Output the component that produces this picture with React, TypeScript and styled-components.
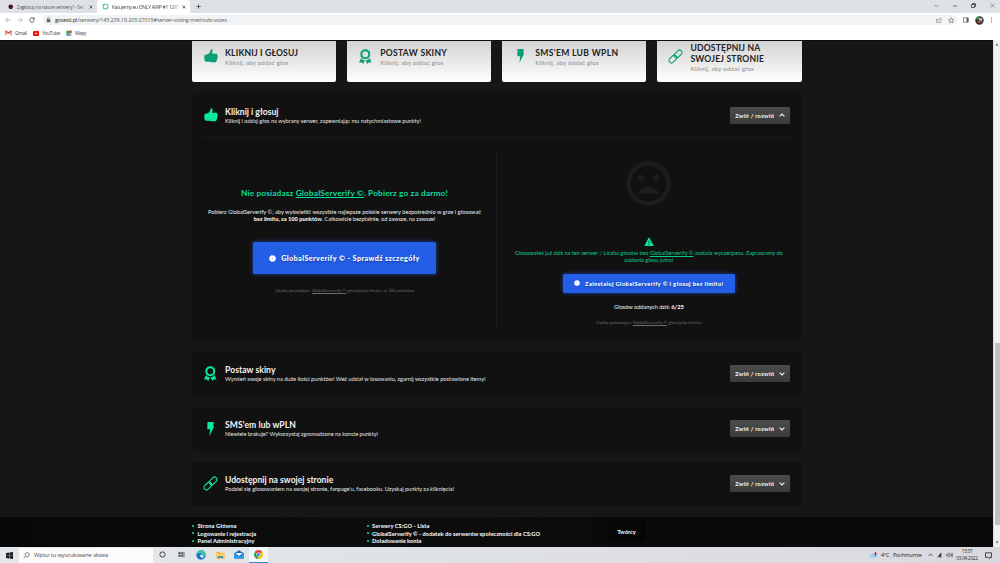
import React from 'react';
import styled, { createGlobalStyle, css } from 'styled-components';

const GlobalStyle = createGlobalStyle`
  * { box-sizing: border-box; }
  html, body { margin: 0; padding: 0; overflow: hidden; }
  body { background: #161616; font-family: "Lato", "Open Sans", sans-serif; }
  svg { display: block; flex: none; }
`;

const GREEN = '#0be8a0';

const Screen = styled.div`
  width: 1000px;
  height: 563px;
  display: flex;
  flex-direction: column;
  overflow: hidden;
  white-space: nowrap;
`;

/* ---------- browser chrome ---------- */
const Chrome = styled.header`
  height: 40px;
  flex: none;
  background: #fff;
  font-family: "Open Sans", sans-serif;
  display: flex;
  flex-direction: column;
`;
const TabStrip = styled.div`
  height: 13px;
  background: #dee1e6;
  display: flex;
  align-items: stretch;
`;
const Tab = styled.div<{ $active?: boolean; $width: number }>`
  width: ${p => p.$width}px;
  padding: 0 4px 0 ${p => (p.$active ? 5 : 8)}px;
  display: flex;
  align-items: center;
  background: ${p => (p.$active ? '#fff' : 'transparent')};
  border-radius: 3px 3px 0 0;
  color: ${p => (p.$active ? '#45484c' : '#55585c')};
`;
const TabTitle = styled.span<{ $ls: number }>`
  flex: 1;
  margin: 0 3px 0 3px;
  font-size: 5px;
  letter-spacing: ${p => p.$ls}px;
  mask-image: linear-gradient(90deg, #000 88%, #0004);
`;
const NewTab = styled.div`
  display: flex;
  align-items: center;
  padding-left: 6px;
`;
const WindowControls = styled.div`
  margin-left: auto;
  width: 68px;
  padding: 0 5px 2px 2px;
  display: flex;
  align-items: center;
  justify-content: space-between;
`;
const Toolbar = styled.div`
  height: 14px;
  display: flex;
  align-items: center;
  padding: 0 7px 0 5px;
`;
const NavIcons = styled.div`
  display: flex;
  gap: 6px;
  width: 37px;
`;
const AddressBar = styled.div`
  width: 916px;
  height: 10.5px;
  border-radius: 6px;
  background: #f1f3f4;
  display: flex;
  align-items: center;
  padding: 0 4px 0 4px;
  color: #5a5d61;
`;
const Url = styled.span`
  flex: 1;
  margin-left: 4px;
  font-size: 5.5px;
  letter-spacing: -0.14px;
  b { font-weight: 400; color: #202124; }
`;
const ToolbarRight = styled.div`
  flex: 1;
  display: flex;
  align-items: center;
  justify-content: space-between;
  padding-left: 5px;
`;
const Bookmarks = styled.div`
  height: 13px;
  display: flex;
  align-items: center;
  padding: 0 0 1px 5px;
  gap: 6px;
  font-size: 4.8px;
  letter-spacing: -0.27px;
  color: #3f4247;
`;
const Bookmark = styled.div`
  display: flex;
  align-items: center;
  gap: 3px;
`;

/* ---------- page ---------- */
const Viewport = styled.div`
  height: 507px;
  flex: none;
  display: flex;
`;
const Page = styled.main`
  width: 993px;
  overflow: hidden;
  border-top: 1px solid #0e0e0e;
  background: #161616;
  display: flex;
  flex-direction: column;
`;
const Container = styled.div`
  width: 609.6px;
  margin-left: 192px;
`;
const CardRow = styled.div`
  display: grid;
  grid-template-columns: repeat(4, 144.2px);
  justify-content: space-between;
  height: 41px;
  margin-bottom: 11.2px;
`;
const Card = styled.div`
  background: linear-gradient(#d3d3d3, #fefefe);
  border-radius: 0 0 2px 2px;
  display: flex;
  align-items: center;
  padding-bottom: 8.4px;
  color: #0a9f76;
`;
const IconSlot = styled.div<{ $lift?: number }>`
  width: 33px;
  padding-left: 4px;
  padding-bottom: ${p => p.$lift ?? 0}px;
  display: flex;
  justify-content: center;
`;
const CardTitle = styled.div<{ $ls?: number }>`
  font-size: 8.6px;
  font-weight: 700;
  line-height: 11px;
  letter-spacing: ${p => p.$ls ?? 0.25}px;
  color: #232323;
  white-space: pre-line;
`;
const CardSub = styled.div`
  font-size: 6px;
  line-height: 7.5px;
  letter-spacing: 0.23px;
  color: #8b8b8b;
`;

const Panel = styled.section`
  background: #111;
  border-radius: 3px;
  margin-bottom: 11.2px;
`;
const PanelHead = styled.div`
  height: 43.9px;
  display: flex;
  align-items: center;
  padding-right: 11.3px;
  color: ${GREEN};
`;
const PanelText = styled.div`
  flex: 1;
  padding-top: 1px;
`;
const PanelTitle = styled.div<{ $ls?: number }>`
  font-size: 8.6px;
  font-weight: 700;
  line-height: 10px;
  letter-spacing: ${p => p.$ls ?? 0}px;
  color: #f4f4f4;
`;
const PanelSub = styled.div<{ $ls: number }>`
  font-size: 5.7px;
  line-height: 8px;
  letter-spacing: ${p => p.$ls}px;
  color: #e6e6e6;
`;
const ToggleButton = styled.button`
  all: unset;
  box-sizing: border-box;
  width: 60.7px;
  height: 17.2px;
  border-radius: 1px;
  background: linear-gradient(#4c4c4c, #3b3b3b);
  color: #f2f2f2;
  font-size: 5.7px;
  font-weight: 900;
  letter-spacing: 0.29px;
  display: flex;
  align-items: center;
  justify-content: space-between;
  padding: 0 5.3px 0 5.6px;
`;
const PanelBody = styled.div`
  margin: 0 11px 0 10px;
  border-top: 1px solid #191919;
  height: 203.4px;
  padding-top: 11px;
  display: flex;
`;
const Column = styled.div<{ $first?: boolean }>`
  height: 181px;
  text-align: center;
  display: flex;
  flex-direction: column;
  align-items: center;
  ${p => p.$first
    ? css`
        flex: 0 0 295px;
        border-right: 1px solid #191919;
        padding: 38px 9px 0 0;
      `
    : css`
        flex: 1;
        padding: 12px 0 0 10px;
      `}
`;
const Promo = styled.h2`
  margin: 0;
  font-size: 8.3px;
  font-weight: 700;
  line-height: 12px;
  letter-spacing: 0.14px;
  color: #0bdc98;
  u { text-decoration-thickness: 0.8px; text-underline-offset: 1px; }
`;
const Copy = styled.p`
  margin: 8.5px 0 0;
  font-size: 5.7px;
  line-height: 7.5px;
  letter-spacing: -0.009px;
  color: #f0f0f0;
  b { font-weight: 900; }
  span { letter-spacing: -0.045px; }
`;
const BlueButton = styled.button<{ $big?: boolean }>`
  all: unset;
  box-sizing: border-box;
  flex: none;
  display: flex;
  align-items: center;
  justify-content: center;
  background: #245ee6;
  box-shadow: 0 0 4px #245ee6aa;
  border-radius: 1.5px;
  color: #fff;
  font-weight: 900;
  text-shadow: 0 1px 2px #0006;
  width: ${p => (p.$big ? 183.5 : 171.5)}px;
  height: ${p => (p.$big ? 32 : 19)}px;
  gap: 5px;
  font-size: ${p => (p.$big ? 7.2 : 5.7)}px;
  letter-spacing: 0.4px;
  margin-top: ${p => (p.$big ? 19.5 : 10)}px;
`;
const FinePrint = styled.p<{ $top: number }>`
  margin: ${p => p.$top}px 0 0;
  font-size: 4.3px;
  line-height: 6px;
  letter-spacing: 0.035px;
  color: #6d6d6d;
`;
const Notice = styled.p`
  margin: 2.5px 0 0;
  font-size: 5.7px;
  line-height: 7.5px;
  letter-spacing: -0.03px;
  color: #0bc98b;
`;
const VoteCount = styled.p`
  margin: 10.5px 0 0;
  font-size: 5.7px;
  line-height: 8px;
  letter-spacing: -0.06px;
  color: #f4f4f4;
  b { font-weight: 900; }
`;
const FaceWrap = styled.div`
  color: #1d1d1d;
  height: 75.5px;
  flex: none;
`;

const Footer = styled.footer`
  height: 30px;
  flex: none;
  padding: 5px 0 0 192px;
  background: linear-gradient(90deg, #080808, #0a0a0a 20%, #0d0d0d 40%, #0a0a0a 65%, #090909);
  display: flex;
  align-items: flex-start;
  overflow: hidden;
`;
const FooterList = styled.ul<{ $width: number }>`
  list-style: none;
  margin: 0;
  padding: 0;
  width: ${p => p.$width}px;
`;
const FooterItem = styled.li<{ $ls?: number }>`
  display: flex;
  align-items: center;
  height: 7.5px;
  font-size: 5.7px;
  font-weight: 900;
  letter-spacing: ${p => p.$ls ?? 0.02}px;
  color: #f0f0f0;
  &::before {
    content: '';
    width: 2px;
    height: 2px;
    border-radius: 50%;
    background: ${GREEN};
    margin-right: 3.5px;
  }
`;
const Creators = styled.div`
  width: 39px;
  height: 20px;
  margin-top: -1px;
  border-radius: 2px;
  background: #060606;
  color: #f4f4f4;
  font-size: 5.7px;
  font-weight: 900;
  display: flex;
  align-items: center;
  justify-content: center;
`;
const Spacer = styled.div`
  flex: 1;
`;

const Scrollbar = styled.div`
  width: 7px;
  background: #f1f1f1;
  display: flex;
  flex-direction: column;
  align-items: center;
  justify-content: space-between;
  padding: 3px 0;
  border-left: 1px solid #dcdcdc;
`;
const Thumb = styled.div`
  width: 5px;
  height: 182px;
  margin: 297px 0 auto;
  background: #c1c1c1;
`;

/* ---------- taskbar ---------- */
const Taskbar = styled.footer`
  height: 16px;
  flex: none;
  background: linear-gradient(90deg, #e4e8ed, #dfe2e4 45%, #d9d8df);
  display: flex;
  align-items: center;
  font-family: "Open Sans", sans-serif;
  color: #222;
`;
const Start = styled.div`
  width: 19px;
  display: flex;
  justify-content: center;
`;
const Search = styled.div`
  width: 134px;
  height: 15px;
  background: #fbfbfb;
  display: flex;
  align-items: center;
  gap: 4px;
  padding-left: 4px;
  font-size: 5.8px;
  letter-spacing: -0.11px;
  color: #4b4b4b;
`;
const AppIcon = styled.div<{ $active?: boolean }>`
  width: 19.2px;
  height: 16px;
  display: flex;
  align-items: center;
  justify-content: center;
  background: ${p => (p.$active ? '#f5f6f8' : 'transparent')};
  border-bottom: 1px solid ${p => (p.$active ? '#3a86cf' : 'transparent')};
`;
const Tray = styled.div`
  margin-left: auto;
  width: 131px;
  display: flex;
  align-items: center;
  font-size: 5.4px;
  letter-spacing: -0.2px;
`;
const TrayText = styled.span<{ $width: number }>`
  width: ${p => p.$width}px;
`;
const TrayIcons = styled.div`
  display: flex;
  align-items: center;
  gap: 3.5px;
  width: 26px;
`;
const Clock = styled.div`
  width: 27px;
  text-align: center;
  font-size: 4.6px;
  line-height: 7px;
  letter-spacing: -0.2px;
`;

/* ---------- icons ---------- */
const ThumbIcon = () => (
  <svg width="14" height="14" viewBox="0 0 28 28" fill="currentColor">
    <path d="M13.600 .8C14.200 0 17 .3 17.200 3.500c.1 2.600-.8 4.600-.9 6.100h7.800c2 0 3 1.400 2.700 3 .9.800 1 2.300.2 3.300.6 1.200.4 2.400-.4 3.200.3 1.400-.2 2.500-1.100 3.100.1 3-1.800 4.800-5.300 4.800-4.500 0-7.600-.7-10.500-1.300H4.500C1.600 25.700.5 21.500.5 18c0-3.500.8-6.700 3.200-6.900 4.600-.4 8.300-2.700 9.900-10.300z" />
  </svg>
);
const AwardIcon = () => (
  <svg width="12.600" height="15" viewBox="0 0 25 30" fill="currentColor">
    <path fillRule="evenodd" d="M12.500 0l2.500 1.200 2.800.1 1.500 2.300 2.300 1.600v2.800l1.100 2.500-1.100 2.500-.2 2.800-2.300 1.500-1.500 2.300-2.800.1-2.300 1.200-2.500-1.200-2.800-.1-1.500-2.300-2.300-1.500-.1-2.800-1.200-2.500 1.200-2.500.1-2.800 2.300-1.600L7.200 1.300 10 1.200zM12.500 4.600a5.900 5.900 0 1 0 0 11.800 5.900 5.900 0 0 0 0-11.800z" />
    <path d="M4 18l3 3.500 4.800.8L8.500 30l-3.200-3.300L0 27.700zM21 18l-3 3.500-4.800.8L16.500 30l3.200-3.300 5.300 1z" />
  </svg>
);
const BoltIcon = () => (
  <svg width="7.500" height="14" viewBox="0 0 15 28" fill="currentColor">
    <path d="M1 0h12.500L12.500 8.500h2L5 28l1.200-13.500H.5z" />
  </svg>
);
const LinkIcon = () => (
  <svg width="15" height="15" viewBox="0 0 30 30" fill="none" stroke="currentColor" strokeWidth="2.200">
    <rect x="11.500" y="4.900" width="17.500" height="9.800" rx="4.900" transform="rotate(-45 20.250 9.800)" />
    <rect x="1" y="15.300" width="17.500" height="9.800" rx="4.900" transform="rotate(-45 9.750 20.200)" />
  </svg>
);
const Chevron = ({ up }: { up?: boolean }) => (
  <svg width="6" height="4" viewBox="0 0 6 4" fill="none" stroke="currentColor" strokeWidth="1.100">
    <path d={up ? 'M.6 3.300L3 1l2.400 2.300' : 'M.6 .7L3 3 5.400 .7'} />
  </svg>
);
const Face = () => (
  <svg width="45" height="45" viewBox="0 0 45 45">
    <circle cx="22.500" cy="22.500" r="20" fill="none" stroke="currentColor" strokeWidth="4.600" />
    <circle cx="14.700" cy="17" r="3.300" fill="currentColor" />
    <circle cx="30.300" cy="17" r="3.300" fill="currentColor" />
    <path d="M11.500 33c2-4.800 6-7.200 11-7.200s9 2.400 11 7.200z" fill="currentColor" />
  </svg>
);
const Warning = () => (
  <svg width="10" height="9.500" viewBox="0 0 20 19">
    <path d="M10 0l10 19H0z" fill={GREEN} />
    <path d="M9 7h2v6H9zM9 14.500h2v2H9z" fill="#0a5b41" />
  </svg>
);
const Badge = ({ size }: { size: number }) => (
  <svg width={size} height={size} viewBox="0 0 12 12">
    <circle cx="6" cy="6" r="5.200" fill="#fff" stroke="#fff" strokeWidth="1.400" strokeDasharray="2.600 1.500" />
    <path d="M5.300 5.200h1.400v3.400H5.300zM5.300 3.200h1.400v1.200H5.300z" fill="#b9cdf9" />
  </svg>
);
const Stroke = ({ d, w = 6, h = 6, sw = 0.7, color = '#5f6368' }: { d: string; w?: number; h?: number; sw?: number; color?: string }) => (
  <svg width={w} height={h} viewBox={`0 0 ${w} ${h}`} fill="none" stroke={color} strokeWidth={sw}>
    <path d={d} />
  </svg>
);

const cards = [
  { icon: <ThumbIcon />, title: 'KLIKNIJ I GŁOSUJ', ls: 0.16 },
  { icon: <AwardIcon />, title: 'POSTAW SKINY', ls: 0.3 },
  { icon: <BoltIcon />, title: "SMS'EM LUB WPLN", ls: 0.32 },
  { icon: <LinkIcon />, title: 'UDOSTĘPNIJ NA\nSWOJEJ STRONIE', ls: 0.2 },
];

const collapsed = [
  { icon: <AwardIcon />, title: 'Postaw skiny', tls: 0.04, sub: 'Wymień swoje skiny na duże ilości punktów! Weź udział w losowaniu, zgarnij wszystkie postawione itemy!', ls: -0.03 },
  { icon: <BoltIcon />, title: "SMS'em lub wPLN", tls: 0.06, sub: 'Niewiele brakuje? Wykorzystaj zgromadzone na koncie punkty!', ls: -0.063 },
  { icon: <LinkIcon />, title: 'Udostępnij na swojej stronie', tls: 0, sub: "Podziel się głosowaniem na swojej stronie, fanpage'u, facebooku. Uzyskaj punkty za kliknięcia!", ls: -0.046 },
];

export default function App() {
  return (
    <Screen>
      <GlobalStyle />
      <Chrome>
        <TabStrip>
          <Tab $width={97}>
            <svg width="5.500" height="5.500" viewBox="0 0 6 6"><circle cx="3" cy="3" r="2.500" fill="#3b0d12" /><circle cx="3" cy="3" r="1" fill="#7a1c22" /></svg>
            <TabTitle $ls={-0.2}>Zagłosuj na nasze serwery! - Ser</TabTitle>
            <Stroke w={4} h={4} d="M.5 .5l3 3M3.500 .5l-3 3" color="#333" />
          </Tab>
          <Tab $width={93} $active>
            <svg width="7" height="7" viewBox="0 0 7 7"><circle cx="3.500" cy="3.500" r="2.500" fill="none" stroke="#16b98a" strokeWidth="1.200" strokeDasharray="3 .9" /></svg>
            <TabTitle $ls={-0.3}>Katujemy.eu ONLY AWP #1 128T</TabTitle>
            <Stroke w={4} h={4} d="M.5 .5l3 3M3.500 .5l-3 3" color="#333" />
          </Tab>
          <NewTab><Stroke w={5} h={5} d="M2.500 .3v4.400M.3 2.500h4.400" color="#333" /></NewTab>
          <WindowControls>
            <Stroke w={5} h={4} d="M.6 .8l1.900 2 1.900-2" />
            <Stroke w={4} h={4} d="M0 2h4" color="#333" />
            <Stroke w={5} h={5} d="M.5 1.500h3v3h-3zM1.500 1.500v-1h3v3h-1" color="#222" />
            <Stroke w={5} h={5} d="M.6 .6l3.800 3.800M4.400 .6L.6 4.400" color="#444" sw={0.5} />
          </WindowControls>
        </TabStrip>
        <Toolbar>
          <NavIcons>
            <Stroke d="M5.800 3H.8M3 .7L.7 3 3 5.300" color="#a3a5a8" />
            <Stroke d="M.2 3h5M3 .7L5.300 3 3 5.300" color="#a3a5a8" />
            <Stroke d="M5 1.700A2.300 2.300 0 1 0 5.300 3.500M5.300 .5v1.700H3.600" color="#3f4246" sw={0.8} />
          </NavIcons>
          <AddressBar>
            <svg width="5" height="6" viewBox="0 0 5 6"><rect x=".7" y="2.200" width="3.600" height="3" fill="#5f6368" /><path d="M1.500 2.300V1.500a1 1 0 0 1 2 0v.8" fill="none" stroke="#5f6368" strokeWidth=".6" /></svg>
            <Url><b>gosetti.pl</b>/serwery/145.239.19.205:27015#server-voting-methods-votes</Url>
            <Stroke w={12} h={6} d="M2 2H.6v3.400h4.200V4M2 4c.2-1.400 1-2 2.500-2M3.800 .7L5.600 2 3.800 3.300" sw={0.5} />
            <svg width="6.500" height="6.500" viewBox="0 0 24 24" fill="none" stroke="#5f6368" strokeWidth="2.300"><path d="M12 2.500l2.900 6.300 6.800.8-5 4.700 1.300 6.800-6-3.400-6 3.400 1.300-6.800-5-4.700 6.800-.8z" /></svg>
          </AddressBar>
          <ToolbarRight>
            <svg width="6" height="6" viewBox="0 0 6 6"><path d="M.6 .8h4.600v4.400H.6z" fill="none" stroke="#5f6368" strokeWidth=".7" /><path d="M3.500 .8h1.800v4.400H3.500z" fill="#5f6368" /></svg>
            <svg width="9" height="9" viewBox="0 0 9 9"><circle cx="4.500" cy="4.500" r="4.200" fill="#22302a" /><path d="M1.200 2.500a4.200 4.200 0 0 1 3-2.200l.8 2-2.500 2z" fill="#3aa04c" /><path d="M4 2.400l2.500-.7 1 2.200-2.800 1.500z" fill="#f0b9a4" /><path d="M2 5.200l3-.8 1 1.800-2.500 1.200z" fill="#c9413c" /><path d="M6 5l2.300.5L6.500 8z" fill="#2c6fb5" /></svg>
            <svg width="3" height="6" viewBox="0 0 3 6" fill="#5f6368"><circle cx="1.500" cy="1" r=".6" /><circle cx="1.500" cy="3" r=".6" /><circle cx="1.500" cy="5" r=".6" /></svg>
          </ToolbarRight>
        </Toolbar>
        <Bookmarks>
          <Bookmark>
            <svg width="7" height="5.500" viewBox="0 0 7 5.500" fill="none" strokeWidth="1.200"><path d="M.9 5.200V.9" stroke="#d8625a" /><path d="M6.100 5.200V.9" stroke="#d8625a" /><path d="M.7 .8l2.800 2.300L6.300 .8" stroke="#dc4437" /></svg>
            Gmail
          </Bookmark>
          <Bookmark>
            <svg width="6.500" height="5" viewBox="0 0 13 10"><rect width="13" height="10" rx="2.500" fill="#f40d0d" /><path d="M5 2.800L9 5 5 7.200z" fill="#fff" /></svg>
            YouTube
          </Bookmark>
          <Bookmark>
            <svg width="6" height="6" viewBox="0 0 6 6"><rect x=".3" y=".8" width="5" height="5" rx=".6" fill="#35a853" /><path d="M.4 5.600L5.200 .9v4.700z" fill="#d8dde2" /><path d="M.5 5.600l2.400-2.400 2.300 2.400z" fill="#4285f4" /><circle cx="4.300" cy="1.700" r="1.500" fill="#e54335" /></svg>
            Mapy
          </Bookmark>
        </Bookmarks>
      </Chrome>

      <Viewport>
        <Page>
          <Container>
            <CardRow>
              {cards.map(c => (
                <Card key={c.title}>
                  <IconSlot $lift={2}>{c.icon}</IconSlot>
                  <div>
                    <CardTitle $ls={c.ls}>{c.title}</CardTitle>
                    <CardSub>Kliknij, aby oddać głos</CardSub>
                  </div>
                </Card>
              ))}
            </CardRow>

            <Panel>
              <PanelHead>
                <IconSlot><ThumbIcon /></IconSlot>
                <PanelText>
                  <PanelTitle>Kliknij i głosuj</PanelTitle>
                  <PanelSub $ls={-0.032}>Kliknij i oddaj głos na wybrany serwer, zapewniając mu natychmiastowe punkty!</PanelSub>
                </PanelText>
                <ToggleButton>Zwiń / rozwiń<Chevron up /></ToggleButton>
              </PanelHead>
              <PanelBody>
                <Column $first>
                  <Promo>Nie posiadasz <u>GlobalServerify ©</u>. Pobierz go za darmo!</Promo>
                  <Copy>
                    Pobierz GlobalServerify ©, aby wyświetlić wszystkie najlepsze polskie serwery bezpośrednio w grze i głosować<br />
                    <b>bez limitu, za 100 punktów</b><span>. Całkowicie bezpłatnie, od zawsze, na zawsze!</span>
                  </Copy>
                  <BlueButton $big><Badge size={7} />GlobalServerify © - Sprawdź szczegóły</BlueButton>
                  <FinePrint $top={14}>Osoby posiadające <u>GlobalServerify ©</u> głosują bez limitu, za 100 punktów</FinePrint>
                </Column>
                <Column>
                  <FaceWrap><Face /></FaceWrap>
                  <Warning />
                  <Notice>
                    Głosowałeś już dziś na ten serwer / Liczba głosów bez <u>GlobalServerify ©</u> została wyczerpana. Zapraszamy do<br />
                    oddania głosu jutro!
                  </Notice>
                  <BlueButton><Badge size={6} />Zainstaluj GlobalServerify © i głosuj bez limitu!</BlueButton>
                  <VoteCount>Głosów oddanych dziś: <b>6/25</b></VoteCount>
                  <FinePrint $top={9}>Osoby posiadające <u>GlobalServerify ©</u> głosują bez limitu</FinePrint>
                </Column>
              </PanelBody>
            </Panel>

            {collapsed.map(p => (
              <Panel key={p.title}>
                <PanelHead>
                  <IconSlot>{p.icon}</IconSlot>
                  <PanelText>
                    <PanelTitle $ls={p.tls}>{p.title}</PanelTitle>
                    <PanelSub $ls={p.ls}>{p.sub}</PanelSub>
                  </PanelText>
                  <ToggleButton>Zwiń / rozwiń<Chevron /></ToggleButton>
                </PanelHead>
              </Panel>
            ))}
          </Container>
          <Spacer />
          <Footer>
            <FooterList $width={174.5}>
              <FooterItem $ls={0.075}>Strona Główna</FooterItem>
              <FooterItem>Logowanie i rejestracja</FooterItem>
              <FooterItem>Panel Administracyjny</FooterItem>
              <FooterItem>Regulamin i warunki korzystania z serwisu</FooterItem>
            </FooterList>
            <FooterList $width={240.5}>
              <FooterItem $ls={0.06}>Serwery CS:GO - Lista</FooterItem>
              <FooterItem>GlobalServerify © - dodatek do serwerów społeczności dla CS:GO</FooterItem>
              <FooterItem $ls={-0.03}>Doładowanie konta</FooterItem>
              <FooterItem>Artykuły i Poradniki</FooterItem>
            </FooterList>
            <Creators>Twórcy</Creators>
          </Footer>
        </Page>
        <Scrollbar>
          <svg width="4" height="3" viewBox="0 0 4 3"><path d="M2 .5L3.500 2.500h-3z" fill="#555" /></svg>
          <Thumb />
          <svg width="4" height="3" viewBox="0 0 4 3"><path d="M2 2.500L3.500 .5h-3z" fill="#555" /></svg>
        </Scrollbar>
      </Viewport>

      <Taskbar>
        <Start>
          <svg width="7" height="7" viewBox="0 0 7 7" fill="#1c1c1c"><path d="M0 .9L3 .5v2.700H0zM3.400 .4L7 0v3.200H3.400zM0 3.600h3v2.800L0 6zM3.400 3.600H7V7l-3.600-.5z" /></svg>
        </Start>
        <Search>
          <Stroke w={7} h={7} d="M.6 6.400l2-2M6.300 2.700a2.100 2.100 0 1 1-4.200 0 2.100 2.100 0 0 1 4.200 0z" color="#444" sw={0.6} />
          Wpisz tu wyszukiwane słowa
        </Search>
        <AppIcon>
          <svg width="7" height="7" viewBox="0 0 7 7"><circle cx="3.500" cy="3.500" r="2.600" fill="none" stroke="#333" strokeWidth=".9" /></svg>
        </AppIcon>
        <AppIcon><Stroke w={7} h={7} d="M.8 .8v1h3.800v-1M.8 2.500h3.800v2H.8zM.8 6.200v-1h3.800v1M6 .8v5.400" color="#333" /></AppIcon>
        <AppIcon>
          <svg width="10" height="10" viewBox="0 0 10 10"><circle cx="5" cy="5" r="4.700" fill="#1476c8" /><path d="M.4 4.500C1 1.500 3 .3 5.200 .3c3 0 4.600 2.400 4.500 4.200-.1 1.500-1.400 2-2.500 1.900.3-2.100-1-3.200-3-3.200-1.600 0-3 .5-3.800 1.300z" fill="#3fc89a" /><path d="M4.200 5.300c.4-1.400 2.600-1.100 3 .4-.2.800-.6 1-.2 1.600.5.500 1.500.4 2.200 0-1.500 1.500-5.300.8-5-2z" fill="#e6f2fb" /></svg>
        </AppIcon>
        <AppIcon>
          <svg width="9" height="8" viewBox="0 0 9 8"><path d="M.3 .8h3l.8 1h4.500v5.700H.3z" fill="#f2b72e" /><path d="M.3 2.800h8.400v2.700H.3z" fill="#fbd86c" /><path d="M2.200 5h4.600v2.500H5.600V6.200H3.400v1.300H2.200z" fill="#2b84d2" /></svg>
        </AppIcon>
        <AppIcon>
          <svg width="10" height="9" viewBox="0 0 10 9"><path d="M.2 3.200L5 .3l4.800 2.900v5.300H.2z" fill="#1668b5" /><path d="M1.300 3h7.400L5 6z" fill="#fff" /><path d="M.2 3.500L5 6.500l4.800-3v5H.2z" fill="#2f9be8" /></svg>
        </AppIcon>
        <AppIcon $active>
          <svg width="9" height="9" viewBox="0 0 9 9"><path d="M4.500 4.500L.7 2.200a4.400 4.400 0 0 1 7.600 0z" fill="#e04335" /><path d="M4.500 4.500V9A4.400 4.400 0 0 1 .7 2.200z" fill="#2fa350" /><path d="M4.500 4.500l3.800-2.300A4.400 4.400 0 0 1 4.500 9z" fill="#fbc116" /><circle cx="4.500" cy="4.500" r="2.100" fill="#fff" /><circle cx="4.500" cy="4.500" r="1.600" fill="#4083ee" /></svg>
        </AppIcon>
        <Tray>
          <TrayText $width={12}>
            <svg width="9" height="8" viewBox="0 0 9 8"><path d="M2.200 6.800a1.700 1.700 0 0 1 0-3.400A2.300 2.300 0 0 1 6.500 3.600a1.600 1.600 0 0 1 .2 3.200z" fill="#9fd0f5" /><path d="M6.600 5V1.800M5.400 2.700L6.600 1.400l1.200 1.300" stroke="#b3202c" strokeWidth="1" fill="none" /></svg>
          </TrayText>
          <TrayText $width={12}>4°C</TrayText>
          <TrayText $width={34.5}>Pochmurnie</TrayText>
          <TrayIcons>
            <Stroke w={5} h={4} d="M.4 3l2.100-2.100L4.600 3" color="#222" />
            <svg width="6" height="6" viewBox="0 0 6 6"><path d="M.5 5.300L5.300 .6v4.700z" fill="#8c8c92" /><path d="M3 2.800l2.300-2.200v4.700H3z" fill="#444" /></svg>
            <Stroke w={7} h={6} d="M.5 2.200h1L3 .9v4.200L1.500 3.800h-1zM4 2q.7 1 0 2M5 1.300q1.300 1.700 0 3.400M6 .6q1.600 2.400 0 4.800" color="#333" sw={0.55} />
          </TrayIcons>
          <Clock>13:37<br />03.04.2022</Clock>
          <Stroke w={12} h={7} d="M4.500 .8h6v4.500h-1.500v1.400l-1.500-1.400h-3z" color="#222" sw={0.8} />
        </Tray>
      </Taskbar>
    </Screen>
  );
}
